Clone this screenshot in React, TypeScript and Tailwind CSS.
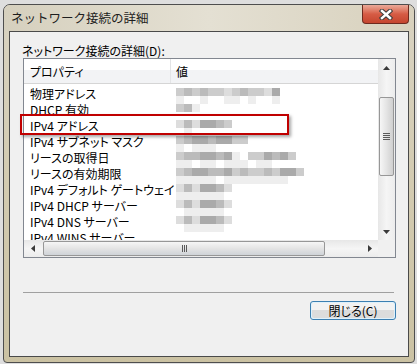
import React from 'react';

type Row = { name: string; dark: string; light: string };

// blurred values, one hex digit per 8px cell
const rows: Row[] = [
  { name: '物理アドレス', dark: 'cbcbccdcbccdaf', light: 'effeffeefeffef' },
  { name: 'DHCP 有効', dark: 'cbe', light: 'fff' },
  { name: 'IPv4 アドレス', dark: 'dbdaabc', light: 'fefffff' },
  { name: 'IPv4 サブネット マスク', dark: 'cbaabaacc', light: 'efeeeffff' },
  { name: 'リースの取得日', dark: 'cbbaabaefccabac', light: 'eefeefeeefeefff' },
  { name: 'リースの有効期限', dark: 'cbaabbacbccbcaac', light: 'eeeeefeeeeeeeeff' },
  { name: 'IPv4 デフォルト ゲートウェイ', dark: 'dbdaabd', light: 'eeeeeef' },
  { name: 'IPv4 DHCP サーバー', dark: 'dbdaabd', light: 'feeeeef' },
  { name: 'IPv4 DNS サーバー', dark: 'dbdaabd', light: 'feeeeef' },
  { name: 'IPv4 WINS サーバー', dark: '', light: '' },
];

const font = "font-['Noto_Sans_CJK_JP',sans-serif] [font-feature-settings:'palt']";

function Mosaic({ dark, light }: { dark: string; light: string }) {
  if (!dark) return null;
  const g = (c: string) => `#${c}${c}${c}${c}${c}${c}`;
  return (
    <svg width={dark.length * 8} height={20} className="block overflow-visible self-start">
      {dark.split('').map((c, i) => (
        <rect key={'d' + i} x={i * 8} y={4} width={8} height={8} fill={g(c)} />
      ))}
      {light.split('').map((c, i) => (
        <rect key={'l' + i} x={i * 8} y={12} width={8} height={8} fill={g(c)} />
      ))}
    </svg>
  );
}

function Tri({ dir }: { dir: 'up' | 'down' | 'left' | 'right' }) {
  const pts = {
    up: '0,4 3.5,0 7,4',
    down: '0,0 3.5,4 7,0',
    left: '4,0 0,3.5 4,7',
    right: '0,0 4,3.5 0,7',
  }[dir];
  const vert = dir === 'up' || dir === 'down';
  return (
    <svg width={vert ? 7 : 4} height={vert ? 4 : 7}>
      <polygon points={pts} fill="#3a3a3a" />
    </svg>
  );
}

function VScroll() {
  return (
    <div className="w-[17px] flex flex-col bg-gradient-to-r from-[#e7e7e7] via-[#f5f5f5] to-[#ececec]">
      <div className="h-[17px] flex items-center justify-center">
        <Tri dir="up" />
      </div>
      <div className="h-[21px]" />
      <div className="mx-[1px] h-[79px] rounded-[2px] border border-[#979797] bg-gradient-to-r from-[#f6f6f6] via-[#e4e4e4] to-[#d0d0d0] flex flex-col items-center justify-center gap-[1px]">
        <div className="w-[7px] h-[1px] bg-[#5a5a5a]" />
        <div className="w-[7px] h-[1px] bg-[#5a5a5a]" />
        <div className="w-[7px] h-[1px] bg-[#5a5a5a]" />
        <div className="w-[7px] h-[1px] bg-[#5a5a5a]" />
      </div>
      <div className="flex-1" />
      <div className="h-[17px] flex items-center justify-center">
        <Tri dir="down" />
      </div>
    </div>
  );
}

function HScroll() {
  return (
    <div className="h-[17px] flex bg-gradient-to-b from-[#e7e7e7] via-[#f5f5f5] to-[#ececec]">
      <div className="w-[17px] flex items-center justify-center">
        <Tri dir="left" />
      </div>
      <div className="ml-[2px] my-[1px] w-[282px] rounded-[2px] border border-[#979797] bg-gradient-to-b from-[#f6f6f6] via-[#e4e4e4] to-[#cfd3d8] flex items-center justify-center gap-[1px]">
        <div className="w-[1px] h-[7px] bg-[#5a5a5a]" />
        <div className="w-[1px] h-[7px] bg-[#5a5a5a]" />
        <div className="w-[1px] h-[7px] bg-[#5a5a5a]" />
      </div>
      <div className="flex-1" />
      <div className="w-[17px] flex items-center justify-center">
        <Tri dir="right" />
      </div>
      <div className="w-[17px] bg-[#f0f0f0]" />
    </div>
  );
}

export default function App() {
  return (
    <div className={`relative w-[417px] h-[364px] bg-[#dedede] pt-[4px] pl-[3px] ${font}`}>
      <div className="w-[412px] h-[359px] flex flex-col border border-[#4e4e4e] rounded-t-[7px] rounded-b-[4px] bg-gradient-to-b from-[#d9d3c2] via-[#d3cbb1] to-[#cbc2a3]">
        {/* title bar */}
        <div className="h-[26px] flex justify-between bg-gradient-to-r from-[#d6d0be] via-[#e4e0d3] to-[#d8d1bd] rounded-t-[6px]">
          <div className="pl-[7px] pt-[5px] text-[12.5px] leading-[16px] text-[#1e1e1e] [font-feature-settings:normal]">
            ネットワーク接続の詳細
          </div>
          <div className="mr-[5px] w-[47px] h-[19px] rounded-b-[4px] border border-t-0 border-[#6e2a1e] bg-gradient-to-b from-[#eaa999] via-[#d65c45] to-[#c5452e] flex items-center justify-center">
            <svg width="14" height="11" viewBox="0 0 14 11">
              <path d="M3 2 L11 9 M11 2 L3 9" stroke="#3c3c3c" strokeWidth="4.5" strokeLinecap="square" />
              <path d="M3 2 L11 9 M11 2 L3 9" stroke="#ffffff" strokeWidth="2.5" strokeLinecap="square" />
            </svg>
          </div>
        </div>

        {/* client area */}
        <div className="mx-[5px] h-[326px] border border-[#4a4a4a] bg-[#f0f0f0] flex flex-col text-[12px] text-black">
          <div className="pt-[12px] pl-[12px] h-[26px] leading-[14px]">ネットワーク接続の詳細(D):</div>

          <div className="ml-[13px] w-[373px] h-[200px] border border-[#828790] bg-white flex flex-col">
            <div className="flex flex-1 min-h-0">
              <div className="flex-1 flex flex-col overflow-hidden">
                <div className="h-[25px] shrink-0 flex border-b border-[#d5d5d5] bg-gradient-to-b from-white from-45% to-[#f2f3f5] to-45%">
                  <div className="w-[147px] pl-[6px] pt-[6px] leading-[14px] border-r border-[#e3e4e6]">プロパティ</div>
                  <div className="pl-[5px] pt-[6px] leading-[14px]">値</div>
                </div>
                {rows.map((r) => (
                  <div key={r.name} className="h-[16px] shrink-0 flex">
                    <div className="w-[152px] h-[16px] pl-[6px] pt-[3px] leading-[14px] whitespace-nowrap">{r.name}</div>
                    <Mosaic dark={r.dark} light={r.light} />
                  </div>
                ))}
              </div>
              <VScroll />
            </div>
            <HScroll />
          </div>

          <div className="ml-[13px] mt-[34px] w-[371px] h-[1px] bg-[#a0a0a0]" />

          <div className="mt-[8px] mr-[12px] self-end w-[86px] h-[19px] rounded-[3px] border border-[#3c7fb1] p-[1px] bg-[#dff1fb]">
            <div className="h-full rounded-[2px] bg-gradient-to-b from-[#f2f2f2] from-50% to-[#dcdcdc] to-50% flex items-center justify-center leading-[14px] pt-[1px]">
              閉じる(C)
            </div>
          </div>
        </div>
      </div>

      {/* annotation */}
      <div className="absolute left-[20px] top-[114px] w-[269px] h-[21px] border-2 border-[#c00000] shadow-[2px_2px_3px_rgba(0,0,0,0.35)]" />
    </div>
  );
}
